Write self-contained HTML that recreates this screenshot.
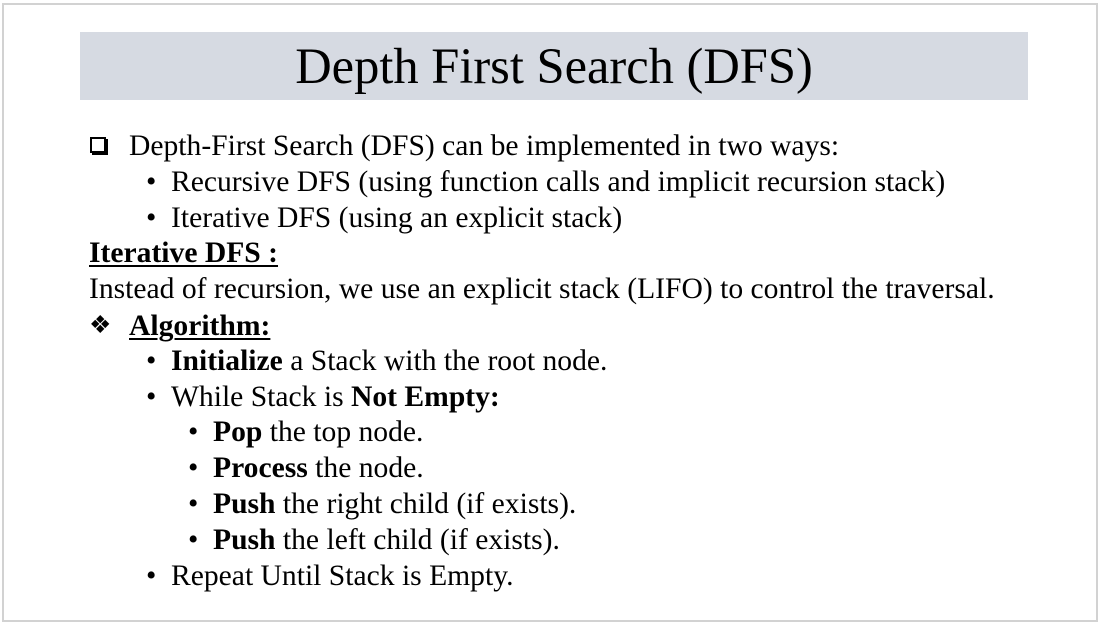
<!DOCTYPE html>
<html><head><meta charset="utf-8"><style>
html,body{margin:0;padding:0;background:#fff;width:1102px;height:626px;overflow:hidden}
.frame{position:absolute;left:2px;top:3px;width:1096px;height:619px;border:2px solid #d2d2d2;box-sizing:border-box}
.title{position:absolute;left:80px;top:32px;width:948px;height:68px;background:#d6dae2;font:50.5px "Liberation Serif",serif;text-align:center;line-height:68px;color:#000}
.l{position:absolute;font:29.6px "Liberation Serif",serif;color:#000;white-space:nowrap;line-height:36px}
u{text-decoration-thickness:2px;text-underline-offset:3px}
.cb{position:absolute;width:16px;height:16px;border:2px solid #000;box-shadow:2px 2px 0 #000;box-sizing:border-box}
</style></head><body>
<div class="frame"></div>
<div class="title">Depth First Search (DFS)</div>
<div class="cb" style="left:90px;top:137px"></div>
<div class="l" style="left:129px;top:128px">Depth-First Search (DFS) can be implemented in two ways:</div>
<div class="l" style="left:146px;top:164px">•</div><div class="l" style="left:171px;top:164px">Recursive DFS (using function calls and implicit recursion stack)</div>
<div class="l" style="left:146px;top:200px">•</div><div class="l" style="left:171px;top:200px">Iterative DFS (using an explicit stack)</div>
<div class="l" style="left:89px;top:235px"><b><u>Iterative DFS :</u></b></div>
<div class="l" style="left:89px;top:271px">Instead of recursion, we use an explicit stack (LIFO) to control the traversal.</div>
<div class="l" style="left:89px;top:308px;font-size:25px">❖</div><div class="l" style="left:129px;top:308px"><b><u>Algorithm:</u></b></div>
<div class="l" style="left:146px;top:343px">•</div><div class="l" style="left:171px;top:343px"><b>Initialize</b> a Stack with the root node.</div>
<div class="l" style="left:146px;top:379px">•</div><div class="l" style="left:171px;top:379px">While Stack is <b>Not Empty:</b></div>
<div class="l" style="left:188px;top:414px">•</div><div class="l" style="left:213px;top:414px"><b>Pop</b> the top node.</div>
<div class="l" style="left:188px;top:450px">•</div><div class="l" style="left:213px;top:450px"><b>Process</b> the node.</div>
<div class="l" style="left:188px;top:486px">•</div><div class="l" style="left:213px;top:486px"><b>Push</b> the right child (if exists).</div>
<div class="l" style="left:188px;top:522px">•</div><div class="l" style="left:213px;top:522px"><b>Push</b> the left child (if exists).</div>
<div class="l" style="left:146px;top:558px">•</div><div class="l" style="left:171px;top:558px">Repeat Until Stack is Empty.</div>
</body></html>
